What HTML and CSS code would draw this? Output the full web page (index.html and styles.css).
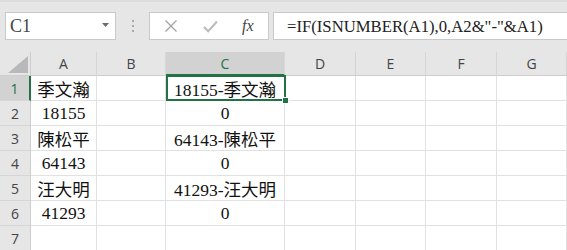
FILE: index.html
```html
<!DOCTYPE html>
<html lang="zh-Hant">
<head>
  <meta charset="UTF-8">
  <title>Excel - IF ISNUMBER</title>
  <link rel="stylesheet" href="styles.css">
</head>
<body>
<div class="app">
  <div class="formula-bar">
    <div class="name-box">
      <span class="name">C1</span>
      <svg class="drop" width="7" height="4" viewBox="0 0 7 4"><path d="M0 0h7L3.5 4z" fill="#6b6b6b"/></svg>
    </div>
    <div class="grip"><i></i><i></i><i></i></div>
    <div class="fx-buttons">
      <svg class="btn" width="14" height="14" viewBox="0 0 14 14"><path d="M1.5 1.5l11 11M12.5 1.5l-11 11" stroke="#a3a3a3" stroke-width="1.3" fill="none"/></svg>
      <svg class="btn" width="15" height="13" viewBox="0 0 15 13"><path d="M1 7l4.2 4.2L14 1.5" stroke="#bdbdbd" stroke-width="2.2" fill="none"/></svg>
      <span class="fx">fx</span>
    </div>
    <div class="formula-input">=IF(ISNUMBER(A1),0,A2&amp;"-"&amp;A1)</div>
  </div>

  <div class="sheet">
    <div class="corner"><svg width="20" height="17" viewBox="0 0 20 17"><path d="M20 0V17H0z" fill="#b9b9b9"/></svg></div>
    <div class="col-head">A</div>
    <div class="col-head">B</div>
    <div class="col-head active">C</div>
    <div class="col-head">D</div>
    <div class="col-head">E</div>
    <div class="col-head">F</div>
    <div class="col-head">G</div>

    <div class="row-head active">1</div>
    <div class="cell">季文瀚</div><div class="cell"></div><div class="cell sel">18155-季文瀚</div><div class="cell"></div><div class="cell"></div><div class="cell"></div><div class="cell"></div>

    <div class="row-head">2</div>
    <div class="cell">18155</div><div class="cell"></div><div class="cell">0</div><div class="cell"></div><div class="cell"></div><div class="cell"></div><div class="cell"></div>

    <div class="row-head">3</div>
    <div class="cell">陳松平</div><div class="cell"></div><div class="cell">64143-陳松平</div><div class="cell"></div><div class="cell"></div><div class="cell"></div><div class="cell"></div>

    <div class="row-head">4</div>
    <div class="cell">64143</div><div class="cell"></div><div class="cell">0</div><div class="cell"></div><div class="cell"></div><div class="cell"></div><div class="cell"></div>

    <div class="row-head">5</div>
    <div class="cell">汪大明</div><div class="cell"></div><div class="cell">41293-汪大明</div><div class="cell"></div><div class="cell"></div><div class="cell"></div><div class="cell"></div>

    <div class="row-head">6</div>
    <div class="cell">41293</div><div class="cell"></div><div class="cell">0</div><div class="cell"></div><div class="cell"></div><div class="cell"></div><div class="cell"></div>

    <div class="row-head">7</div>
    <div class="cell"></div><div class="cell"></div><div class="cell"></div><div class="cell"></div><div class="cell"></div><div class="cell"></div><div class="cell"></div>
  </div>
</div>
</body>
</html>
```

FILE: styles.css
```css
:root {
  --green: #217346;
  --bar: #e6e6e6;
  --grid: #e1e1e1;
  --head-line: #cdcdcd;
  --serif: 'Liberation Serif', 'Noto Sans CJK TC', serif;
  --ui: 'Open Sans', 'Noto Sans', sans-serif;
}
html, body {
  margin: 0;
  padding: 0;
  background: #fff;
  overflow: hidden;
}
.app {
  width: 567px;
  height: 250px;
  overflow: hidden;
}

/* formula bar */
.formula-bar {
  display: flex;
  align-items: flex-start;
  height: 52px;
  box-sizing: border-box;
  padding: 10px 0 0 5px;
  background: var(--bar);
  border-top: 2px solid #dcdcdc;
}
.name-box {
  width: 111px;
  height: 28px;
  box-sizing: border-box;
  background: #fff;
  border: 1px solid #c9c9c9;
  display: flex;
  align-items: center;
  justify-content: space-between;
  padding: 0 6px 0 4px;
}
.name {
  font-family: var(--serif);
  font-size: 18px;
  color: #444;
}
.drop { margin-top: -2px; }
.grip {
  width: 33px;
  height: 28px;
  display: flex;
  flex-direction: column;
  align-items: center;
  justify-content: center;
  gap: 3px;
}
.grip i {
  display: block;
  width: 2px;
  height: 2px;
  background: #a8a8a8;
}
.fx-buttons {
  width: 120px;
  height: 28px;
  box-sizing: border-box;
  background: #fff;
  border: 1px solid #c9c9c9;
  display: flex;
  align-items: center;
  padding: 0 0 0 14px;
  gap: 25px;
}
.fx {
  font-family: var(--serif);
  font-style: italic;
  font-size: 16px;
  color: #444;
  margin-left: -1px;
}
.formula-input {
  flex: 1;
  margin-left: 4px;
  height: 28px;
  box-sizing: border-box;
  background: #fff;
  border: 1px solid #c9c9c9;
  border-right: 0;
  padding-left: 13px;
  font-family: var(--serif);
  font-size: 16.7px;
  line-height: 27px;
  color: #222;
  white-space: nowrap;
}

/* sheet grid */
.sheet {
  display: grid;
  grid-template-columns: 31px 66px 69px 119px 71px 70px 71px 70px;
  grid-template-rows: 24px repeat(7, 25px);
}
.corner, .col-head, .row-head, .cell {
  box-sizing: border-box;
  display: flex;
  align-items: center;
  justify-content: center;
}
.corner {
  background: var(--bar);
  border-right: 1px solid var(--head-line);
  border-bottom: 1px solid var(--head-line);
  align-items: flex-end;
  justify-content: flex-end;
  padding: 0 2px 2px 0;
}
.col-head {
  background: var(--bar);
  border-right: 1px solid #d6d6d6;
  border-bottom: 1px solid var(--head-line);
  font-family: var(--ui);
  font-size: 14px;
  color: #444;
}
.row-head {
  background: var(--bar);
  border-right: 1px solid var(--head-line);
  border-bottom: 1px solid #d6d6d6;
  font-family: var(--ui);
  font-size: 14px;
  color: #444;
}
.col-head.active {
  background: #d2d2d2;
  color: var(--green);
  border-bottom: 2px solid var(--green);
}
.row-head.active {
  background: #d2d2d2;
  color: var(--green);
  border-right: 2px solid var(--green);
}
.cell {
  border-right: 1px solid var(--grid);
  border-bottom: 1px solid var(--grid);
  font-family: var(--serif);
  font-size: 17.5px;
  color: #111;
  white-space: nowrap;
  padding-top: 1px;
}
.cell.sel {
  position: relative;
}
.cell.sel::after {
  content: "";
  position: absolute;
  left: 0;
  top: -1px;
  right: -2px;
  bottom: -1px;
  border: 2px solid var(--green);
}
.cell.sel::before {
  content: "";
  position: absolute;
  right: -5px;
  bottom: -4px;
  width: 5px;
  height: 5px;
  background: var(--green);
  border: 1px solid #fff;
  z-index: 1;
}
```
